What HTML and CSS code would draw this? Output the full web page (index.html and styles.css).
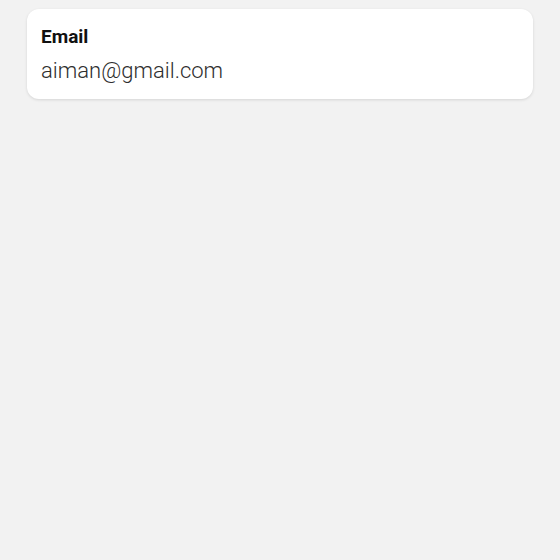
FILE: index.html
```html
<!DOCTYPE html>
<html>
<head>
<meta charset="utf-8">
<link rel="stylesheet" href="styles.css">
</head>
<body>
<div class="page">
  <div class="card">
    <div class="label">Email</div>
    <div class="value">aiman@gmail.com</div>
  </div>
</div>
</body>
</html>
```
FILE: styles.css
```css
html, body {
  margin: 0;
  padding: 0;
  background: #f2f2f2;
  font-family: Roboto, "Noto Sans", sans-serif;
}
.page {
  width: 560px;
  height: 560px;
  padding: 9px 27px 0 27px;
  box-sizing: border-box;
}
.card {
  background: #ffffff;
  border-radius: 12px;
  box-shadow: 0 1px 3px rgba(0, 0, 0, 0.12);
  padding: 15px 14px 0 14px;
  height: 90px;
  box-sizing: border-box;
}
.label {
  font-size: 19px;
  font-weight: 700;
  color: #111111;
  line-height: 26px;
}
.value {
  font-size: 22px;
  font-weight: 300;
  color: #2e2e2e;
  line-height: 30px;
  margin-top: 6px;
}
```
